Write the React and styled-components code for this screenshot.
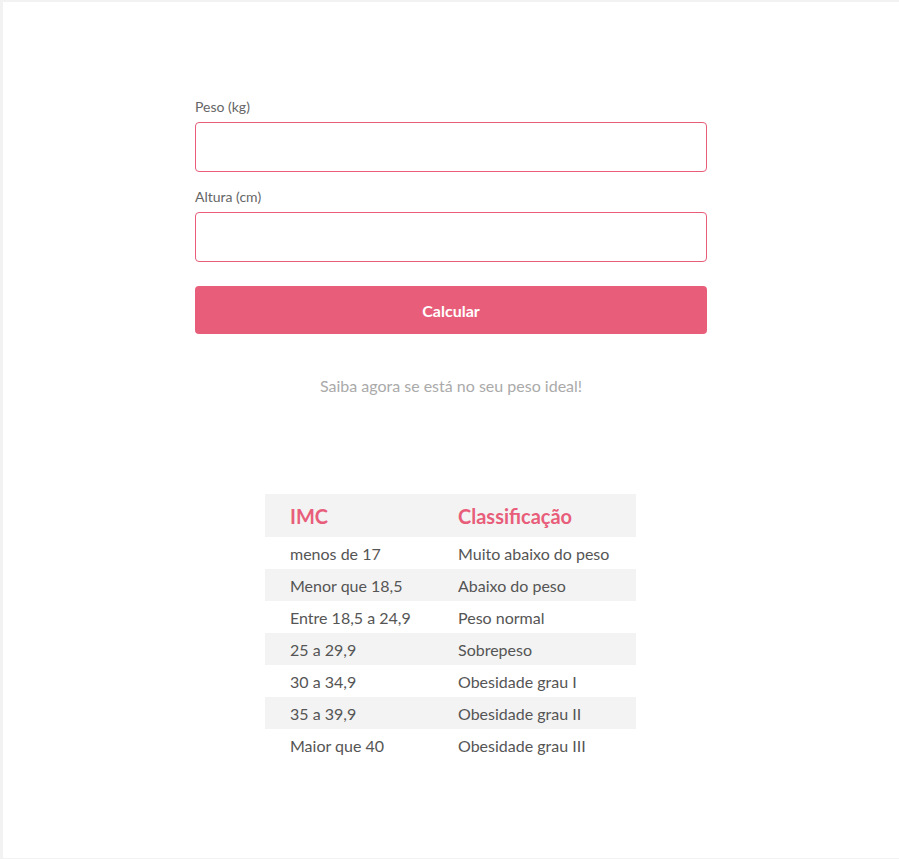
import React from 'react'
import styled, { createGlobalStyle } from 'styled-components'

const GlobalStyle = createGlobalStyle`
    body {
        margin: 0;
        padding: 2px 0 0 3px;
        background-color: #f2f2f2;
        font-family: Lato, "Open Sans", sans-serif;
    }
`

const Page = styled.div`
    background-color: #fff;
    min-height: 856px;
    display: flex;
    flex-direction: column;
    align-items: center;
    padding-top: 96px;
    box-sizing: border-box;
`

const Form = styled.form`
    width: 512px;
    display: flex;
    flex-direction: column;
`

const Label = styled.label`
    font-size: 14px;
    color: #666;
    margin-bottom: 7px;
`

const Input = styled.input`
    height: 50px;
    box-sizing: border-box;
    border: 1px solid #e85d7a;
    border-radius: 4px;
    margin-bottom: 16px;
    outline: none;
`

const Button = styled.button`
    height: 48px;
    margin-top: 8px;
    background-color: #e85e7a;
    color: #fff;
    font-family: inherit;
    font-size: 16px;
    font-weight: 700;
    border: none;
    border-radius: 4px;
`

const Hint = styled.p`
    margin: 42px 0 0;
    text-align: center;
    font-size: 16px;
    color: #aaa;
`

const Table = styled.table`
    margin-top: 99px;
    margin-left: -1px;
    width: 371px;
    border-collapse: collapse;
`

const Row = styled.tr`
    background-color: ${props => props.shaded ? '#f3f3f3' : '#fff'};
`

const Head = styled.th`
    height: 43px;
    padding: 0 0 0 25px;
    text-align: left;
    font-size: 20px;
    font-weight: 700;
    color: #e85e7a;
    width: ${props => props.w || 'auto'};
`

const Cell = styled.td`
    height: 32px;
    padding: 0 0 0 25px;
    font-size: 16px;
    color: #555;
`

const rows = [
    ['menos de 17', 'Muito abaixo do peso'],
    ['Menor que 18,5', 'Abaixo do peso'],
    ['Entre 18,5 a 24,9', 'Peso normal'],
    ['25 a 29,9', 'Sobrepeso'],
    ['30 a 34,9', 'Obesidade grau I'],
    ['35 a 39,9', 'Obesidade grau II'],
    ['Maior que 40', 'Obesidade grau III'],
]

const App = () => {
  return (
    <>
      <GlobalStyle/>
      <Page>
        <Form onSubmit={e => e.preventDefault()}>
            <Label>Peso (kg)</Label>
            <Input type="number"/>
            <Label>Altura (cm)</Label>
            <Input type="number"/>
            <Button type="submit">Calcular</Button>
            <Hint>Saiba agora se está no seu peso ideal!</Hint>
        </Form>
        <Table>
            <thead>
                <Row shaded>
                    <Head w="143px">IMC</Head>
                    <Head>Classificação</Head>
                </Row>
            </thead>
            <tbody>
                {rows.map((r, i) => (
                    <Row key={i} shaded={i % 2 === 1}>
                        <Cell>{r[0]}</Cell>
                        <Cell>{r[1]}</Cell>
                    </Row>
                ))}
            </tbody>
        </Table>
      </Page>
    </>
  )
}

export default App
